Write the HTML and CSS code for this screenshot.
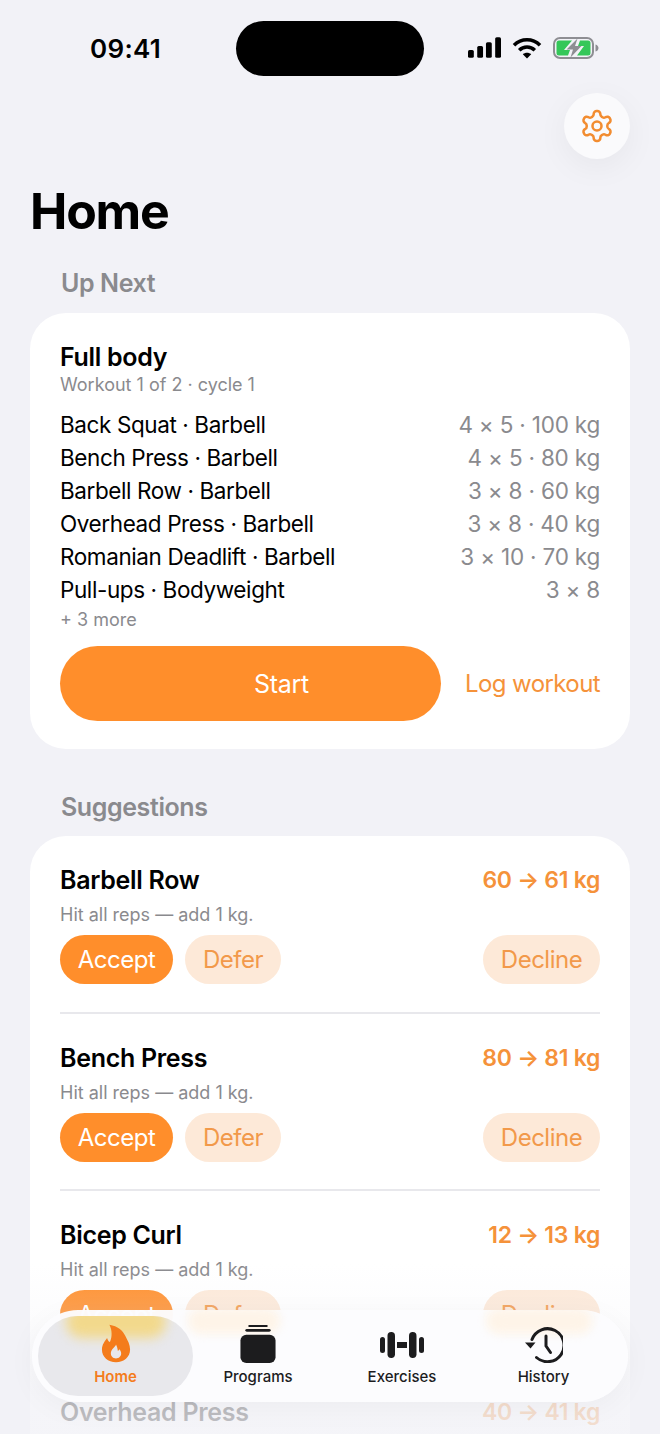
FILE: index.html
```html
<!DOCTYPE html>
<html lang="en">
<head>
<meta charset="utf-8">
<title>Home</title>
<link rel="stylesheet" href="styles.css">
</head>
<body>
<div class="screen">
  <header class="status">
    <span class="time">09:41</span>
    <span class="island"></span>
    <span class="status-icons">
      <svg width="33" height="21" viewBox="0 0 34 21"><g fill="#000"><rect x="0" y="13" width="6" height="8" rx="1.6"/><rect x="9.5" y="9" width="6" height="12" rx="1.6"/><rect x="18.5" y="5" width="6" height="16" rx="1.6"/><rect x="28" y="0" width="6" height="21" rx="1.6"/></g></svg>
      <svg width="30" height="22" viewBox="0 0 30 22"><g fill="none" stroke="#000" stroke-width="3.6"><path d="M2 8.200C9.400 1 20.600 1 28 8.200"/><path d="M7.200 13.200c4.400-4.200 11.200-4.200 15.600 0"/></g><path d="M10.800 17.200c2.400-2 6-2 8.400 0L15 21.600z" fill="#000"/></svg>
      <svg width="46" height="22" viewBox="0 0 46 22"><rect x="1" y="1" width="39" height="20" rx="6" fill="none" stroke="#8e8e93" stroke-width="2"/><path d="M3.500 6a2.500 2.500 0 0 1 2.500-2.500h13L11 13h6l-2 5.500H6A2.500 2.500 0 0 1 3.500 16zM37.500 6A2.500 2.500 0 0 0 35 3.500H27L25 9h6l-7 9.500H35a2.500 2.500 0 0 0 2.500-2.500z" fill="#34c759"/><path d="M24.500 1.500 13.500 12.500h6.500l-2.500 8 11-11.500h-6.500z" fill="#8e8e93"/><path d="M42.500 7.500c2 .5 3 2 3 3.500s-1 3-3 3.500z" fill="#8e8e93"/></svg>
    </span>
  </header>

  <div class="toolbar">
    <button class="gear" aria-label="Settings">
      <svg width="36" height="36" viewBox="0 0 24 24" fill="none" stroke="#f28c30" stroke-width="1.7" stroke-linecap="round" stroke-linejoin="round"><path d="M12.220 2h-.44a2 2 0 0 0-2 2v.18a2 2 0 0 1-1 1.730l-.43.25a2 2 0 0 1-2 0l-.15-.08a2 2 0 0 0-2.730.73l-.22.38a2 2 0 0 0 .73 2.730l.15.1a2 2 0 0 1 1 1.720v.51a2 2 0 0 1-1 1.740l-.15.09a2 2 0 0 0-.73 2.730l.22.38a2 2 0 0 0 2.730.73l.15-.08a2 2 0 0 1 2 0l.43.25a2 2 0 0 1 1 1.730V20a2 2 0 0 0 2 2h.44a2 2 0 0 0 2-2v-.18a2 2 0 0 1 1-1.730l.43-.25a2 2 0 0 1 2 0l.15.08a2 2 0 0 0 2.730-.73l.22-.39a2 2 0 0 0-.73-2.730l-.15-.08a2 2 0 0 1-1-1.740v-.5a2 2 0 0 1 1-1.740l.15-.09a2 2 0 0 0 .73-2.730l-.22-.38a2 2 0 0 0-2.730-.73l-.15.08a2 2 0 0 1-2 0l-.43-.25a2 2 0 0 1-1-1.730V4a2 2 0 0 0-2-2z"/><circle cx="12" cy="12" r="3"/></svg>
    </button>
  </div>

  <h1 class="title">Home</h1>

  <h2 class="section-label">Up Next</h2>
  <section class="card next-card">
    <h3 class="workout-name">Full body</h3>
    <p class="workout-meta">Workout 1 of 2 · cycle 1</p>
    <ul class="exercise-list">
      <li class="exercise"><span>Back Squat · Barbell</span><span class="dose">4 × 5 · 100 kg</span></li>
      <li class="exercise"><span>Bench Press · Barbell</span><span class="dose">4 × 5 · 80 kg</span></li>
      <li class="exercise"><span>Barbell Row · Barbell</span><span class="dose">3 × 8 · 60 kg</span></li>
      <li class="exercise"><span>Overhead Press · Barbell</span><span class="dose">3 × 8 · 40 kg</span></li>
      <li class="exercise"><span>Romanian Deadlift · Barbell</span><span class="dose">3 × 10 · 70 kg</span></li>
      <li class="exercise"><span>Pull-ups · Bodyweight</span><span class="dose">3 × 8</span></li>
    </ul>
    <p class="more">+ 3 more</p>
    <div class="start-row">
      <button class="start">Start</button>
      <a class="log">Log workout</a>
    </div>
  </section>

  <h2 class="section-label suggestions-label">Suggestions</h2>
  <section class="card suggestions">
    <article class="suggestion">
      <div class="s-head"><span class="s-name">Barbell Row</span><span class="s-change">60 → 61 kg</span></div>
      <p class="s-why">Hit all reps — add 1 kg.</p>
      <div class="s-actions"><button class="pill accept">Accept</button><button class="pill soft">Defer</button><button class="pill soft decline">Decline</button></div>
    </article>
    <article class="suggestion">
      <div class="s-head"><span class="s-name">Bench Press</span><span class="s-change">80 → 81 kg</span></div>
      <p class="s-why">Hit all reps — add 1 kg.</p>
      <div class="s-actions"><button class="pill accept">Accept</button><button class="pill soft">Defer</button><button class="pill soft decline">Decline</button></div>
    </article>
    <article class="suggestion">
      <div class="s-head"><span class="s-name">Bicep Curl</span><span class="s-change">12 → 13 kg</span></div>
      <p class="s-why">Hit all reps — add 1 kg.</p>
      <div class="s-actions"><button class="pill accept">Accept</button><button class="pill soft">Defer</button><button class="pill soft decline">Decline</button></div>
    </article>
    <article class="suggestion">
      <div class="s-head"><span class="s-name">Overhead Press</span><span class="s-change">40 → 41 kg</span></div>
    </article>
  </section>

  <div class="fade"></div>

  <nav class="tabbar">
    <span class="glow-soft glow-defer"></span>
    <span class="glow-soft glow-decline"></span>
    <a class="tab active">
      <span class="glow"></span>
      <svg width="30" height="39" viewBox="0 0 32 40"><path fill-rule="evenodd" fill="#f47c1c" d="M9 0c9 1.500 14 6 17 12 2.500 5 5 9 5 14.500C31 34.500 24.500 40 16 40S1 34.500 1 26.500C1 21 4 17.500 6.500 14c.5 2 1.500 3.500 3 4.500C12 13 12 6 9 0zM16 21c-.5 2.500-5.500 5-5.500 9.500 0 3.500 2.500 5.500 5.500 5.500s5.500-2 5.500-5.500c0-2-1-3.500-2-4.500-.3 1-.8 1.500-1.500 2-.3-2.500-1-5-2-7z"/></svg>
      <span class="tab-label">Home</span>
    </a>
    <a class="tab">
      <svg class="icon-programs" width="36" height="39" viewBox="0 0 36 40"><g fill="#1c1c1e"><rect x="8" y="0" width="20" height="2" rx="1"/><rect x="5" y="4" width="26" height="3" rx="1.500"/><rect x="0" y="10" width="36" height="29" rx="6"/></g></svg>
      <span class="tab-label">Programs</span>
    </a>
    <a class="tab">
      <svg class="icon-exercises" width="44" height="26" viewBox="0 0 44 26"><g fill="#1c1c1e"><rect x="0" y="5" width="5" height="16" rx="2.500"/><rect x="7.500" y="0" width="7.500" height="26" rx="3.700"/><rect x="17" y="10" width="10" height="6"/><rect x="29" y="0" width="7.500" height="26" rx="3.700"/><rect x="39" y="5" width="5" height="16" rx="2.500"/></g></svg>
      <span class="tab-label">Exercises</span>
    </a>
    <a class="tab">
      <svg width="38" height="36" viewBox="0 0 38 36"><g fill="none" stroke="#1c1c1e" stroke-width="3" stroke-linecap="round" stroke-linejoin="round"><path d="M7 12.500A16.500 16.500 0 1 1 11.500 30.500"/><path d="M21 9v10l4.500 6.500"/></g><path d="M0 15.500h10.500L5.500 21.500z" fill="#1c1c1e"/></svg>
      <span class="tab-label">History</span>
    </a>
  </nav>
</div>
</body>
</html>
```
FILE: styles.css
```css
* { box-sizing: border-box; }
html, body { margin: 0; padding: 0; }
body { background: #f2f2f7; font-family: Inter, "Noto Sans", sans-serif; color: #000; }
h1, h2, h3, p, ul { margin: 0; padding: 0; }
button { font-family: inherit; border: 0; padding: 0; }

.screen { position: relative; width: 660px; height: 1434px; overflow: hidden; background: #f2f2f7; }

.status { display: flex; align-items: center; height: 76px; padding-top: 21px; }
.time { width: 236px; padding-left: 90px; font-size: 26px; font-weight: 600; letter-spacing: 0.3px; line-height: 55px; }
.island { width: 188px; height: 55px; border-radius: 28px; background: #000; }
.status-icons { display: flex; align-items: center; gap: 11px; margin-left: 44px; margin-top: -2px; }

.toolbar { display: flex; justify-content: flex-end; padding: 17px 30px 0; }
.gear { width: 66px; height: 66px; border-radius: 50%; background: #fafafc; display: flex; align-items: center; justify-content: center; box-shadow: 0 8px 32px rgba(0,0,0,.05); }

.title { margin: 22px 0 0 30px; font-size: 50px; font-weight: 700; letter-spacing: -1.2px; line-height: 60px; }

.section-label { margin: 27px 0 0 61px; font-size: 25px; font-weight: 600; color: #8a8a8e; letter-spacing: -0.4px; line-height: 30px; }
.suggestions-label { margin-top: 43px; }

.card { margin: 15px 30px 0; background: #fff; border-radius: 36px; padding: 0 30px; }
.suggestions-label + .card { margin-top: 14px; }

.next-card { height: 436px; padding-top: 29px; }
.workout-name { font-size: 25px; font-weight: 600; letter-spacing: -0.3px; line-height: 30px; }
.workout-meta { margin-top: 2px; font-size: 18px; color: #8a8a8e; line-height: 22px; }
.exercise-list { list-style: none; margin-top: 12px; }
.exercise { display: flex; justify-content: space-between; font-size: 22.500px; line-height: 33px; letter-spacing: -0.4px; }
.dose { color: #8a8a8e; letter-spacing: -0.2px; }
.more { margin-top: 3px; font-size: 18px; line-height: 22px; color: #8a8a8e; }
.start-row { display: flex; align-items: center; justify-content: space-between; margin-top: 15px; }
.start { width: 381px; height: 75px; padding-left: 62px; border-radius: 38px; background: #ff8e2b; color: #fff; font-size: 25px; letter-spacing: -0.3px; }
.log { font-size: 24px; color: #f5923a; letter-spacing: -0.6px; }

.suggestions { height: 700px; padding-top: 27px; }
.suggestion { height: 177px; border-bottom: 2px solid #e8e8ec; }
.suggestion:first-child { height: 151px; }
.suggestion:last-child { border-bottom: 0; }
.suggestion + .suggestion { padding-top: 27px; }
.s-head { display: flex; justify-content: space-between; align-items: center; line-height: 34px; }
.s-name { font-size: 25px; font-weight: 600; letter-spacing: -0.3px; }
.s-change { font-size: 23px; font-weight: 600; color: #f5923a; letter-spacing: -0.3px; }
.s-why { margin-top: 7px; font-size: 18px; color: #8a8a8e; line-height: 22px; }
.s-actions { display: flex; gap: 12px; margin-top: 9px; }
.pill { height: 49px; border-radius: 25px; font-size: 24px; letter-spacing: -0.5px; }
.accept { width: 113px; background: #ff8e2b; color: #fff; }
.soft { width: 96px; background: #fde9d8; color: #f2994a; }
.decline { width: 117px; margin-left: auto; }

.fade { position: absolute; left: 0; right: 0; bottom: 0; height: 170px; background: linear-gradient(to bottom, rgba(242,242,247,0) 0, rgba(242,242,247,.2) 30%, rgba(242,242,247,.75) 75%, rgba(242,242,247,.8) 100%); }

.tabbar { position: absolute; left: 32px; top: 1310px; width: 596px; height: 92px; border-radius: 46px; overflow: hidden; background: rgba(252,252,254,.97); display: grid; grid-template-columns: 155px 130px 158px 125px; padding: 6px; box-shadow: 0 6px 30px rgba(0,0,0,.04); }
.tab { position: relative; overflow: hidden; display: flex; flex-direction: column; align-items: center; justify-content: flex-end; height: 80px; padding-bottom: 10px; color: #1c1c1e; }
.tab svg { position: relative; margin-bottom: 5px; }
.tab .icon-programs { margin-bottom: 4px; }
.tab .icon-exercises { margin-bottom: 10px; }
.tab-label { position: relative; font-size: 15px; font-weight: 500; line-height: 18px; }
.active { border-radius: 40px; background: #e8e8ec; color: #f47c1c; }
.active .tab-label { font-weight: 600; }
.glow { position: absolute; left: 28px; top: -10px; width: 100px; height: 32px; border-radius: 16px; background: #f2d98c; filter: blur(6px); }
.glow-soft { position: absolute; top: -2px; height: 26px; border-radius: 13px; background: #fef4e8; filter: blur(5px); }
.glow-defer { left: 156px; width: 92px; }
.glow-decline { left: 454px; width: 106px; }
```
